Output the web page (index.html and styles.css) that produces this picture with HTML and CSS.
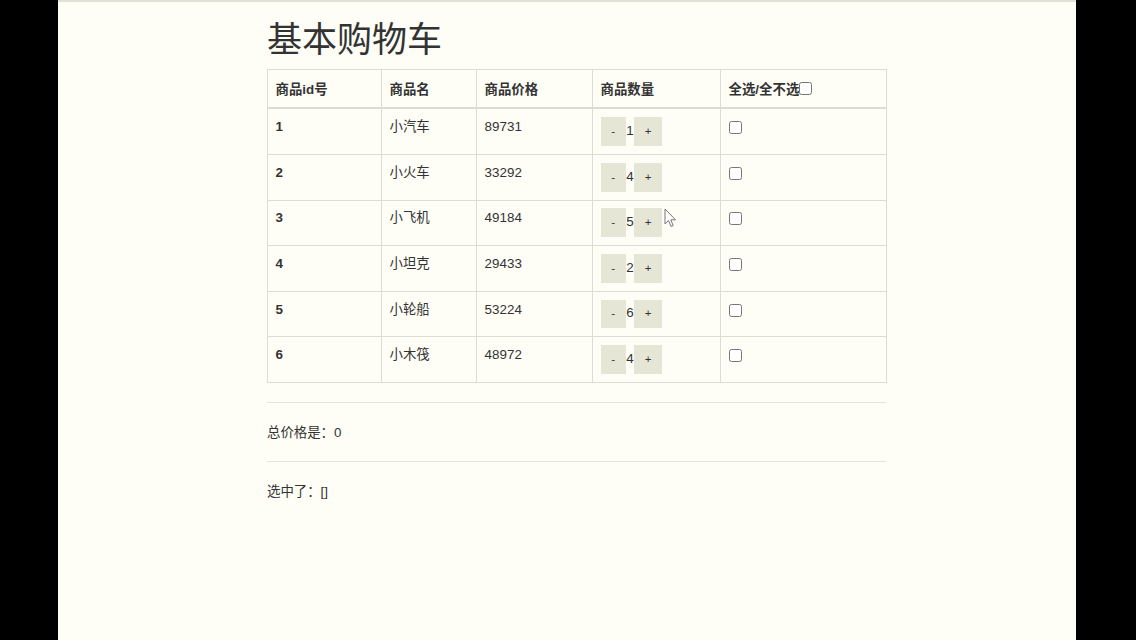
FILE: index.html
```html
<!DOCTYPE html>
<html lang="zh-CN">
<head>
<meta charset="utf-8">
<title>基本购物车</title>
<link rel="stylesheet" href="styles.css">
</head>
<body>
<div class="page">
  <div class="content">
    <h1 class="title">基本购物车</h1>
    <table class="cart">
      <colgroup>
        <col class="w1"><col class="w2"><col class="w3"><col class="w4"><col class="w5">
      </colgroup>
      <thead>
        <tr>
          <th>商品id号</th>
          <th>商品名</th>
          <th>商品价格</th>
          <th>商品数量</th>
          <th>全选/全不选<input type="checkbox" class="chk"></th>
        </tr>
      </thead>
      <tbody>
        <tr><td class="id">1</td><td>小汽车</td><td>89731</td><td><button class="btn">-</button><span class="num">1</span><button class="btn">+</button></td><td><input type="checkbox" class="chk"></td></tr>
        <tr><td class="id">2</td><td>小火车</td><td>33292</td><td><button class="btn">-</button><span class="num">4</span><button class="btn">+</button></td><td><input type="checkbox" class="chk"></td></tr>
        <tr><td class="id">3</td><td>小飞机</td><td>49184</td><td><button class="btn">-</button><span class="num">5</span><button class="btn">+</button></td><td><input type="checkbox" class="chk"></td></tr>
        <tr><td class="id">4</td><td>小坦克</td><td>29433</td><td><button class="btn">-</button><span class="num">2</span><button class="btn">+</button></td><td><input type="checkbox" class="chk"></td></tr>
        <tr><td class="id">5</td><td>小轮船</td><td>53224</td><td><button class="btn">-</button><span class="num">6</span><button class="btn">+</button></td><td><input type="checkbox" class="chk"></td></tr>
        <tr><td class="id">6</td><td>小木筏</td><td>48972</td><td><button class="btn">-</button><span class="num">4</span><button class="btn">+</button></td><td><input type="checkbox" class="chk"></td></tr>
      </tbody>
    </table>
    <hr class="sep">
    <div class="line">总价格是：0</div>
    <hr class="sep">
    <div class="line">选中了：[]</div>
  </div>
  <svg class="cursor" width="14" height="21" viewBox="0 0 14 21">
    <path d="M1 1 L1 16 L4.5 12.5 L7 18.5 L9.2 17.6 L6.8 11.8 L11.5 11.8 Z" fill="#fff" stroke="#777" stroke-width="1" stroke-linejoin="round"/>
  </svg>
</div>
</body>
</html>
```

FILE: styles.css
```css
* {
  box-sizing: border-box;
}

html, body {
  margin: 0;
  padding: 0;
  height: 100%;
}

body {
  background: #000;
  font-family: "Liberation Sans", "Noto Sans CJK SC", sans-serif;
  font-size: 13.4px;
  line-height: 19px;
  color: #333;
}

.page {
  position: relative;
  width: 1018px;
  height: 640px;
  margin-left: 58px;
  background: #fefef7;
  border-top: 2px solid #e2e2d2;
}

.content {
  padding-left: 209px;
  width: 829px;
}

.title {
  margin: 19px 0 10px;
  font-size: 35px;
  line-height: 38px;
  font-weight: normal;
  color: #333;
  font-family: "Liberation Sans", "Noto Sans CJK SC", sans-serif;
}

.cart {
  width: 619px;
  border-collapse: collapse;
  table-layout: fixed;
  border: 1px solid #dcdcd4;
}

.w1 { width: 114px; }
.w2 { width: 95px; }
.w3 { width: 116px; }
.w4 { width: 128px; }
.w5 { width: 166px; }

.cart th,
.cart td {
  border: 1px solid #dcdcd4;
  text-align: left;
  padding: 7.9px 7.6px;
  vertical-align: top;
}

.cart th {
  font-weight: bold;
  padding-top: 9.8px;
  padding-bottom: 8.6px;
  border-bottom-width: 2px;
  white-space: nowrap;
}

.cart td.id {
  font-weight: bold;
}

.chk {
  width: 13px;
  height: 13px;
  margin: 4px 0 0;
  vertical-align: top;
}

.cart th .chk {
  margin-top: 2px;
}

.btn {
  font-family: "Liberation Sans", sans-serif;
  font-size: 11.5px;
  line-height: 17.2px;
  padding: 4.8px 9.55px;
  border: 1px solid #e6e6d6;
  background: #e6e6d6;
  color: #333;
  border-radius: 0;
  margin: 0;
}

.num {
  margin: 0 0.5px 0 0.8px;
}

.sep {
  margin: 19.5px 0;
  width: 619px;
  border: 0;
  border-top: 1px solid #e4e4dc;
}

.line {
  line-height: 19px;
}

.cursor {
  position: absolute;
  left: 606px;
  top: 206px;
}
```
